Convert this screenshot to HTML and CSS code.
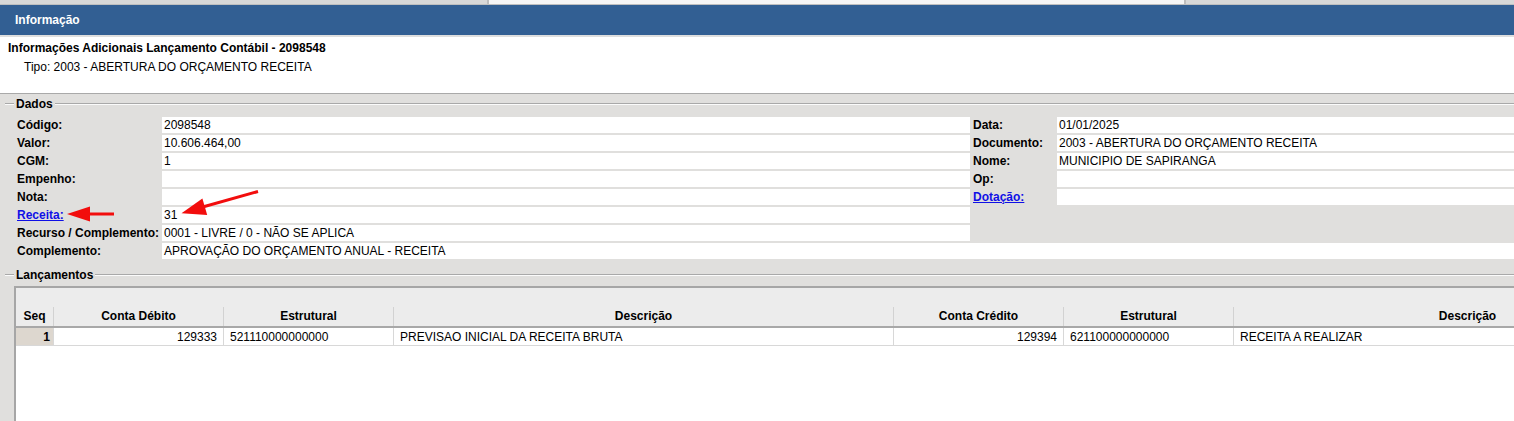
FILE: index.html
```html
<!DOCTYPE html>
<html lang="pt-BR">
<head>
<meta charset="utf-8">
<title>Informação</title>
<link rel="stylesheet" href="styles.css">
</head>
<body>
<div class="page">
  <div class="topstrip">
    <div class="ts-left"></div>
    <div class="ts-mid"></div>
    <div class="ts-right"></div>
  </div>
  <div class="titlebar">Informação</div>
  <div class="info">
    <div class="info-title">Informações Adicionais Lançamento Contábil - 2098548</div>
    <div class="info-tipo">Tipo: 2003 - ABERTURA DO ORÇAMENTO RECEITA</div>
  </div>

  <section class="group">
    <div class="group-head"><span class="gl-left"></span><span class="gl-text">Dados</span><span class="gl-right"></span></div>
    <table class="dados">
      <colgroup>
        <col class="c-lbl1"><col class="c-val1"><col class="c-lbl2"><col class="c-val2">
      </colgroup>
      <tr><td class="lbl">Código:</td><td class="val">2098548</td><td class="lbl lbl2">Data:</td><td class="val">01/01/2025</td></tr>
      <tr><td class="lbl">Valor:</td><td class="val">10.606.464,00</td><td class="lbl lbl2">Documento:</td><td class="val">2003 - ABERTURA DO ORÇAMENTO RECEITA</td></tr>
      <tr><td class="lbl">CGM:</td><td class="val">1</td><td class="lbl lbl2">Nome:</td><td class="val">MUNICIPIO DE SAPIRANGA</td></tr>
      <tr><td class="lbl">Empenho:</td><td class="val"></td><td class="lbl lbl2">Op:</td><td class="val"></td></tr>
      <tr><td class="lbl">Nota:</td><td class="val"></td><td class="lbl lbl2"><a href="#" class="link">Dotação:</a></td><td class="val"></td></tr>
      <tr><td class="lbl"><a href="#" class="link">Receita:</a></td><td class="val">31</td><td class="empty" colspan="2" rowspan="2"></td></tr>
      <tr><td class="lbl">Recurso / Complemento:</td><td class="val">0001 - LIVRE / 0 - NÃO SE APLICA</td></tr>
      <tr><td class="lbl">Complemento:</td><td class="val" colspan="3">APROVAÇÃO DO ORÇAMENTO ANUAL - RECEITA</td></tr>
    </table>
  </section>

  <section class="group group-lanc">
    <div class="group-head"><span class="gl-left"></span><span class="gl-text">Lançamentos</span><span class="gl-right"></span></div>
    <div class="grid">
      <div class="grid-top"></div>
      <div class="grid-head">
        <div>Seq</div>
        <div>Conta Débito</div>
        <div>Estrutural</div>
        <div>Descrição</div>
        <div>Conta Crédito</div>
        <div>Estrutural</div>
        <div>Descrição</div>
      </div>
      <div class="grid-row">
        <div class="seq">1</div>
        <div class="num">129333</div>
        <div class="txt">521110000000000</div>
        <div class="txt">PREVISAO INICIAL DA RECEITA BRUTA</div>
        <div class="num">129394</div>
        <div class="txt">621100000000000</div>
        <div class="txt">RECEITA A REALIZAR</div>
      </div>
    </div>
  </section>

  <svg class="annot" width="300" height="240" viewBox="0 0 300 240" aria-hidden="true">
    <line x1="114" y1="214" x2="86" y2="214" stroke="#f20d0d" stroke-width="3"/>
    <polygon points="67,214 90,206.5 90,221.5" fill="#f20d0d"/>
    <line x1="258" y1="191.5" x2="200" y2="207.8" stroke="#f20d0d" stroke-width="3"/>
    <polygon points="181.5,213.3 202.4,198.6 207.2,215" fill="#f20d0d"/>
  </svg>
</div>
</body>
</html>
```

FILE: styles.css
```css
html, body {
  margin: 0;
  padding: 0;
}
body {
  background: #e0dfdd;
  font-family: "Liberation Sans", Arial, sans-serif;
  font-size: 12px;
  color: #000;
  overflow: hidden;
}
.page {
  position: relative;
  width: 1514px;
  height: 421px;
  overflow: hidden;
}

/* top strip */
.topstrip {
  display: flex;
  height: 4px;
  background: #d8d8d8;
  border-bottom: 1px solid #bfbfbf;
}
.ts-left { width: 487px; }
.ts-mid {
  width: 695px;
  background: #f5f5f5;
  border-left: 2px solid #bdbdbd;
  border-right: 2px solid #bdbdbd;
}
.ts-right { flex: 1; }

/* title bar */
.titlebar {
  height: 30px;
  line-height: 30px;
  background: #325f93;
  color: #fff;
  font-weight: bold;
  padding-left: 15px;
  border-bottom: 2px solid #dedede;
}

/* info block */
.info {
  background: #fff;
  border-bottom: 1px solid #a9a9a9;
  padding: 4px 8px 0;
  box-sizing: border-box;
  height: 57px;
}
.info-title {
  font-weight: bold;
  line-height: 15px;
}
.info-tipo {
  line-height: 15px;
  margin-top: 4px;
  padding-left: 16px;
}

/* group heads (fieldset look) */
.group-head {
  display: flex;
  align-items: center;
  height: 14px;
  margin-top: 3px;
  margin-left: 5px;
}
.gl-left, .gl-right {
  height: 1px;
  background: #a9a9a9;
  border-bottom: 1px solid #fbfbfb;
}
.gl-left { width: 9px; margin-right: 2px; }
.gl-right { flex: 1; margin-left: 2px; }
.gl-text {
  font-weight: bold;
  line-height: 14px;
}

/* dados table */
.dados {
  margin-top: 4px;
  margin-left: 15px;
  border-collapse: separate;
  border-spacing: 0 2px;
  table-layout: fixed;
  width: 1499px;
}
.c-lbl1 { width: 147px; }
.c-val1 { width: 808px; }
.c-lbl2 { width: 87px; }
.c-val2 { width: 457px; }
.dados td {
  height: 16px;
  line-height: 16px;
  padding: 0;
  white-space: nowrap;
  overflow: hidden;
  vertical-align: middle;
}
.dados .lbl {
  font-weight: bold;
  padding-left: 2px;
}
.dados .lbl2 { padding-left: 3px; }
.dados .val {
  background: #fff;
  padding-left: 2px;
}
.link {
  color: #1010e6;
  text-decoration: underline;
}

/* lançamentos */
.group-lanc .group-head { margin-top: 7px; }
.grid {
  margin-top: 4px;
  margin-left: 14px;
  width: 1688px;
  height: 140px;
  border-top: 2px solid #a6a6a6;
  border-left: 2px solid #a6a6a6;
  background: #fff;
}
.grid-top {
  height: 19px;
  background: #ececec;
}
.grid-head, .grid-row {
  display: grid;
  grid-template-columns: 38px 170px 170px 500px 170px 170px 468px;
}
.grid-head {
  background: #ececec;
  border-bottom: 2px solid #a8a8a8;
}
.grid-head > div {
  height: 19px;
  line-height: 19px;
  text-align: center;
  font-weight: bold;
  border-right: 1px solid #d2d2d2;
  box-sizing: border-box;
}
.grid-row > div {
  height: 18px;
  line-height: 18px;
  border-right: 1px solid #d8d8d8;
  border-bottom: 1px solid #d8d8d8;
  box-sizing: border-box;
  white-space: nowrap;
  overflow: hidden;
}
.grid-row .seq {
  background: #ddd7cf;
  text-align: right;
  font-weight: bold;
  padding-right: 3px;
}
.grid-row .num {
  text-align: right;
  padding-right: 6px;
}
.grid-row .txt {
  padding-left: 6px;
}

/* annotation arrows overlay */
.annot {
  position: absolute;
  left: 0;
  top: 0;
  pointer-events: none;
}
```
